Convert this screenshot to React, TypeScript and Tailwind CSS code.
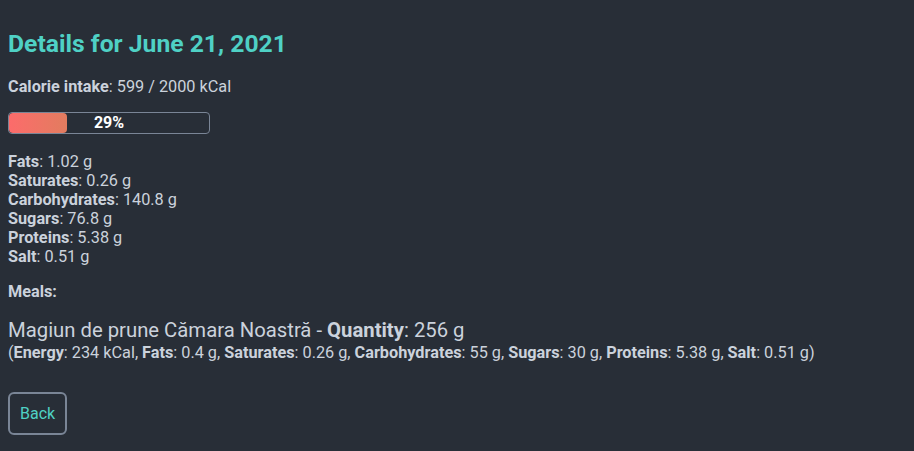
import React from 'react';

const nutrients = [
  { label: 'Fats', value: '1.02 g' },
  { label: 'Saturates', value: '0.26 g' },
  { label: 'Carbohydrates', value: '140.8 g' },
  { label: 'Sugars', value: '76.8 g' },
  { label: 'Proteins', value: '5.38 g' },
  { label: 'Salt', value: '0.51 g' },
];

const mealInfo = [
  { label: 'Energy', value: '234 kCal' },
  { label: 'Fats', value: '0.4 g' },
  { label: 'Saturates', value: '0.26 g' },
  { label: 'Carbohydrates', value: '55 g' },
  { label: 'Sugars', value: '30 g' },
  { label: 'Proteins', value: '5.38 g' },
  { label: 'Salt', value: '0.51 g' },
];

export default function App() {
  const percent = 29;

  return (
    <div className="min-h-screen bg-[#282e37] text-[#cbd2dc] font-['Roboto',sans-serif] px-2 pt-[28px]">
      {/* Title */}
      <h1 className="text-[24.7px] leading-8 font-bold text-[#4fd1c5]">Details for June 21, 2021</h1>

      {/* Calorie intake */}
      <p className="mt-[17px] text-[16.25px] leading-[19px]">
        <b>Calorie intake</b>: 599 / 2000 kCal
      </p>

      {/* Progress bar */}
      <div className="relative mt-[16px] w-[202px] h-[22px] rounded border border-[#7a8596] overflow-hidden">
        <div
          className="h-full rounded bg-gradient-to-r from-[#fc6b6b] to-[#e27c5f]"
          style={{ width: `${percent}%` }}
        />
        <span className="absolute inset-0 flex items-center justify-center text-[16px] font-bold text-white">
          {percent}%
        </span>
      </div>

      {/* Nutrients */}
      <div className="mt-[18px] text-[16.25px] leading-[19px]">
        {nutrients.map((n) => (
          <div key={n.label}>
            <b>{n.label}</b>: {n.value}
          </div>
        ))}
      </div>

      <p className="mt-[16px] text-[16.25px] leading-[19px] font-bold">Meals:</p>

      {/* Meal */}
      <div className="mt-[17px]">
        <div className="text-[20.3px] leading-6">
          Magiun de prune Cămara Noastră - <b>Quantity</b>: 256 g
        </div>
        <div className="mt-[1px] text-[16.25px] leading-[19px]">
          (
          {mealInfo.map((m, i) => (
            <span key={m.label}>
              <b>{m.label}</b>: {m.value}
              {i < mealInfo.length - 1 ? ', ' : ''}
            </span>
          ))}
          )
        </div>
      </div>

      {/* Back button */}
      <button className="mt-[30px] h-[43px] px-[10px] rounded-md border-2 border-[#7a8596] text-[16px] text-[#4fd1c5]">
        Back
      </button>
    </div>
  );
}
